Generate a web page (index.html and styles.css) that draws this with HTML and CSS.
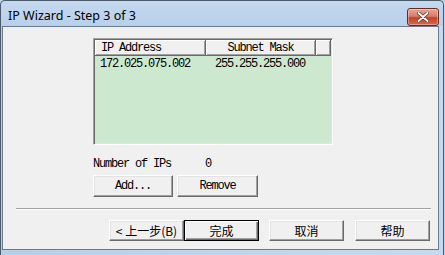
FILE: index.html
```html
<!DOCTYPE html>
<html lang="zh-CN">
<head>
  <meta charset="UTF-8" />
  <title>IP Wizard - Step 3 of 3</title>
  <link rel="stylesheet" href="styles.css">
</head>
<body>
  <div class="window">
    <div class="titlebar">
      <span class="title">IP Wizard - Step 3 of 3</span>
      <button class="close" aria-label="Close">
        <svg width="12" height="10" viewBox="0 0 12 10">
          <path d="M1.5 1 L10.5 9 M10.5 1 L1.5 9" stroke="#5a1a10" stroke-width="3.2" stroke-linecap="round"/>
          <path d="M1.5 1 L10.5 9 M10.5 1 L1.5 9" stroke="#fff" stroke-width="2" stroke-linecap="round"/>
        </svg>
      </button>
    </div>

    <div class="client">
      <div class="main">
        <div class="listbox">
          <div class="list-head">
            <div class="head-cell col-ip">IP Address</div>
            <div class="head-cell col-mask center">Subnet Mask</div>
            <div class="head-cell col-rest"></div>
          </div>
          <div class="list-row">
            <span class="cell col-ip">172.025.075.002</span>
            <span class="cell col-mask">255.255.255.000</span>
          </div>
        </div>

        <div class="count">
          <span class="count-label">Number of IPs</span>
          <span>0</span>
        </div>

        <div class="actions">
          <button class="btn mono btn-add">Add...</button>
          <button class="btn mono btn-remove">Remove</button>
        </div>
      </div>

      <div class="separator"></div>

      <div class="footer">
        <button class="btn cjk">&lt; 上一步(B)</button>
        <button class="btn cjk default">完成</button>
        <button class="btn cjk cancel">取消</button>
        <button class="btn cjk help">帮助</button>
      </div>
    </div>
  </div>
</body>
</html>
```

FILE: styles.css
```css
* {
  box-sizing: border-box;
}

body {
  margin: 0;
  width: 445px;
  height: 255px;
  overflow: hidden;
  background: #bfd5ed;
}

.window {
  width: 444px;
  height: 255px;
  display: flex;
  flex-direction: column;
  background: linear-gradient(to right, #b6cfe9, #c6daef);
  border: 1px solid #4a5a6c;
  border-bottom: none;
  border-radius: 5px 5px 0 0;
  padding: 0 4px 5px 1px;
}

.titlebar {
  height: 25px;
  display: flex;
  align-items: center;
  justify-content: space-between;
  padding-left: 7px;
  background: linear-gradient(to bottom, #c4d8ee, #b9d0ea);
  margin-left: -1px;
  margin-right: -4px;
  padding-right: 4px;
  border-radius: 5px 5px 0 0;
}

.title {
  font-family: "Noto Sans", sans-serif;
  font-size: 12.5px;
  color: #000;
  padding-top: 3px;
}

.close {
  width: 32px;
  height: 18px;
  margin-top: 6px;
  padding: 0;
  border: 1px solid #6b2a1f;
  border-radius: 3px;
  background: linear-gradient(to bottom, #eba595 0%, #dc7c66 45%, #c4432b 55%, #d46a52 100%);
  box-shadow: inset 0 0 0 1px rgba(255, 255, 255, 0.35);
  display: flex;
  align-items: center;
  justify-content: center;
}

.client {
  flex: 1;
  display: flex;
  flex-direction: column;
  background: #f0f0f0;
  border: 1px solid #6a7b8e;
}

.main {
  padding: 11px 0 0 90px;
  font-family: "Liberation Mono", monospace;
  font-size: 12px;
  letter-spacing: -1.2px;
  color: #000;
}

.listbox {
  width: 240px;
  height: 107px;
  background: #cce8cf;
  border: 1px solid;
  border-color: #a0a0a0 #fff #fff #a0a0a0;
  box-shadow: inset 1px 1px 0 #696969, inset -1px -1px 0 #e3e3e3;
  padding: 1px 1px 0 1px;
}

.list-head {
  display: flex;
  height: 16px;
}

.head-cell {
  height: 16px;
  line-height: 17px;
  background: #f0f0f0;
  border-right: 1px solid #696969;
  border-bottom: 1px solid #696969;
  box-shadow: inset 1px 1px 0 #fff, inset -1px -1px 0 #a0a0a0;
  padding-left: 6px;
  white-space: nowrap;
}

.head-cell.center {
  text-align: center;
  padding-left: 0;
}

.col-ip {
  width: 111px;
}

.col-mask {
  width: 110px;
}

.col-rest {
  flex: 1;
}

.list-row {
  display: flex;
  height: 15px;
  line-height: 17px;
}

.cell {
  white-space: nowrap;
  padding-left: 5px;
}

.cell.col-mask {
  padding-left: 9px;
}

.count {
  display: flex;
  height: 14px;
  line-height: 16px;
  margin-top: 11px;
}

.count-label {
  width: 112px;
}

.actions {
  display: flex;
  gap: 4px;
  margin-top: 5px;
}

.btn {
  height: 22px;
  padding: 0;
  background: #f0f0f0;
  color: #000;
  border: 1px solid;
  border-color: #fff #696969 #696969 #fff;
  box-shadow: inset -1px -1px 0 #a0a0a0, inset 1px 1px 0 #e3e3e3;
}

.mono {
  font-family: "Liberation Mono", monospace;
  font-size: 12px;
  letter-spacing: -1.2px;
}

.btn-add {
  width: 80px;
}

.btn-remove {
  width: 81px;
}

.separator {
  margin: 11px 0 0 13px;
  width: 415px;
  height: 2px;
  border-top: 1px solid #a0a0a0;
  border-bottom: 1px solid #fff;
}

.footer {
  display: flex;
  padding: 10px 0 0 106px;
}

.cjk {
  width: 75px;
  height: 21px;
  font-family: "Noto Sans CJK SC", sans-serif;
  font-size: 12px;
  line-height: 1;
}

.default {
  border: 1px solid #000;
  box-shadow: inset 1px 1px 0 #fff, inset -1px -1px 0 #696969, inset -2px -2px 0 #a0a0a0;
}

.cancel {
  margin-left: 10px;
}

.help {
  margin-left: 11px;
}
```
